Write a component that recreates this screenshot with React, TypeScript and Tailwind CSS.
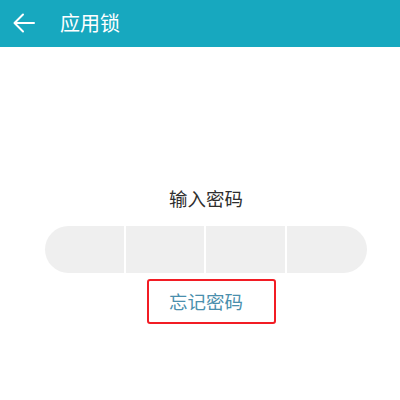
export default function App() {
  const font = { fontFamily: '"Noto Sans CJK SC", "Noto Sans", sans-serif' };
  return (
    <div className="h-[400px] w-[400px] overflow-hidden bg-white" style={font}>
      <div className="flex h-[47px] items-center bg-[#17a8bf] pb-[2px]">
        <svg className="ml-[13px] h-[20px] w-[22px]" viewBox="0 0 22 20" fill="none" stroke="#ffffff" strokeWidth="2" strokeLinecap="round" strokeLinejoin="round">
          <path d="M21 10H2" />
          <path d="M10 1.5L1.5 10L10 18.5" />
        </svg>
        <span className="ml-[25px] text-[20px] leading-none text-white">应用锁</span>
      </div>

      <div className="flex flex-col items-center pl-[12px]">
        <div className="mt-[138px] text-[18.5px] leading-[26px] text-[#2e2e2e]">输入密码</div>
        <div className="mt-[15px] grid h-[47px] w-[322px] grid-cols-4 divide-x-2 divide-white overflow-hidden rounded-full bg-[#efefef]">
          <div />
          <div />
          <div />
          <div />
        </div>
        <div className="ml-[11px] mt-[6px] flex h-[45px] w-[129px] items-center justify-center rounded-[3px] border-[2.5px] border-[#f21c24]">
          <span className="mr-[11px] text-[18.5px] leading-none text-[#4a8fad]">忘记密码</span>
        </div>
      </div>
    </div>
  );
}
